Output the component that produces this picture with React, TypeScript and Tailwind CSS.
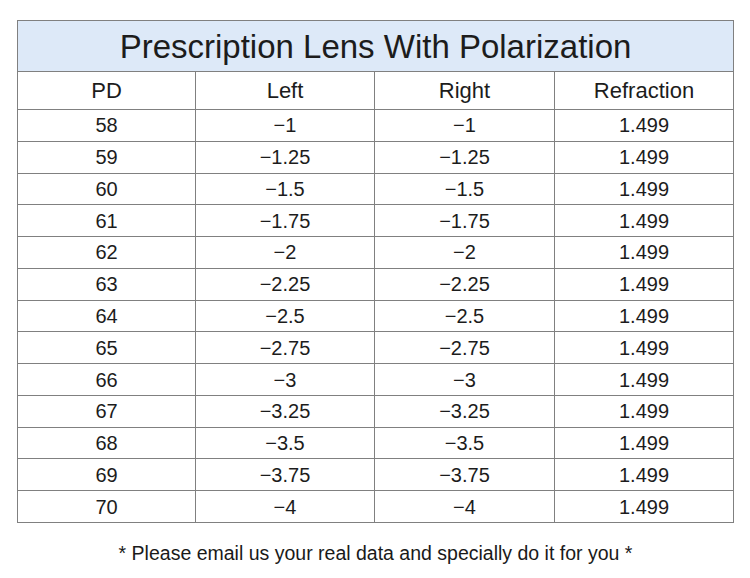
const rows: [number, string][] = [
  [58, "−1"],
  [59, "−1.25"],
  [60, "−1.5"],
  [61, "−1.75"],
  [62, "−2"],
  [63, "−2.25"],
  [64, "−2.5"],
  [65, "−2.75"],
  [66, "−3"],
  [67, "−3.25"],
  [68, "−3.5"],
  [69, "−3.75"],
  [70, "−4"],
];

const cols = ["w-[178px]", "w-[179px]", "w-[180px]", "flex-1"];

function Row({ cells, head }: { cells: (string | number)[]; head?: boolean }) {
  return (
    <div className={`flex border-t border-[#808080] ${head ? "h-[38px] text-[22px]" : "h-[31.77px] text-[20px]"}`}>
      {cells.map((c, i) => (
        <div
          key={i}
          className={`${cols[i]} flex items-center justify-center ${i < 3 ? "border-r border-[#808080]" : ""}`}
        >
          {c}
        </div>
      ))}
    </div>
  );
}

export default function App() {
  return (
    <div
      className="w-[750px] h-[578px] bg-white pt-[20px] pl-[17px] text-[#1c1c1c]"
      style={{ fontFamily: '"Liberation Sans", Arial, sans-serif' }}
    >
      <div className="w-[717px] border border-[#808080]">
        <div className="h-[50px] bg-[#dde9f8] flex items-center justify-center text-[33px] leading-none">
          Prescription Lens With Polarization
        </div>
        <Row head cells={["PD", "Left", "Right", "Refraction"]} />
        {rows.map(([pd, v]) => (
          <Row key={pd} cells={[pd, v, v, "1.499"]} />
        ))}
      </div>
      <p className="mt-[16px] text-[19.5px] text-center w-[717px] text-[#1a1a1a]">
        * Please email us your real data and specially do it for you *
      </p>
    </div>
  );
}
